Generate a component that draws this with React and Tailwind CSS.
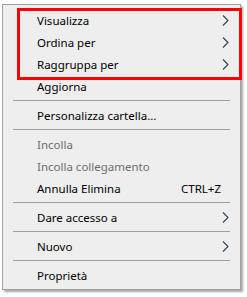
const Chevron = () => (
  <svg width="7" height="11" viewBox="0 0 7 11" className="shrink-0">
    <polyline points="1,0.5 6,5.5 1,10.5" fill="none" stroke="#2f3f55" strokeWidth="1.1" />
  </svg>
)

function Item({ label, sub, shortcut, disabled }) {
  return (
    <div className="flex h-[22px] items-center pl-[34px] pr-[11px] pt-[1px]">
      <span className={`flex-1 ${disabled ? 'text-[#6d6d6d]' : 'text-black'}`}>{label}</span>
      {shortcut && <span className="pr-[8px] text-black">{shortcut}</span>}
      {sub && <Chevron />}
    </div>
  )
}

const Sep = () => (
  <div className="flex h-[7px] items-center px-[10px]">
    <div className="h-px w-full bg-[#a0a0a0]" />
  </div>
)

export default function App() {
  return (
    <div className="h-[297px] w-[247px] bg-white pl-[2px] pt-[4px] font-['Noto_Sans',sans-serif] text-[11.5px] leading-none">
      <div className="relative w-[239px] border border-[#a0a0a0] bg-[#eeeeee] pb-[3px] pt-[4px] shadow-[2px_2px_2px_rgba(0,0,0,0.35)]">
        <Item label="Visualizza" sub />
        <Item label="Ordina per" sub />
        <Item label="Raggruppa per" sub />
        <Item label="Aggiorna" />
        <Sep />
        <Item label="Personalizza cartella..." />
        <Sep />
        <Item label="Incolla" disabled />
        <Item label="Incolla collegamento" disabled />
        <Item label="Annulla Elimina" shortcut="CTRL+Z" />
        <Sep />
        <Item label="Dare accesso a" sub />
        <Sep />
        <Item label="Nuovo" sub />
        <Sep />
        <Item label="Proprietà" />

        {/* highlight box */}
        <div className="absolute left-[14px] top-[3px] h-[72px] w-[225px] border-[3px] border-[#ff0000]" />
      </div>
    </div>
  )
}
